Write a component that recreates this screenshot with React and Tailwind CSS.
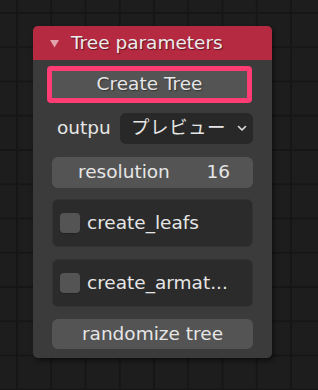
const font = { fontFamily: '"DejaVu Sans", "Noto Sans CJK JP", sans-serif' };

const Checkbox = ({ label }) => (
  <div className="flex items-center h-[48px] mx-[19px] rounded-[6px] bg-[#2b2b2b] border border-[#333333] pl-[7px]">
    <div className="w-[20px] h-[20px] rounded-[4px] bg-[#545454] shadow-[0_1px_0_#222]" />
    <span className="ml-[7px] text-[18.5px] text-[#e6e6e6] leading-none whitespace-nowrap">{label}</span>
  </div>
);

export default function App() {
  return (
    <div
      className="w-[318px] h-[390px] overflow-hidden bg-[#1d1d1d] bg-[linear-gradient(to_right,#161616_2px,transparent_2px),linear-gradient(to_bottom,#161616_2px,transparent_2px)] bg-[size:34.25px_34.25px] bg-[position:16px_12px] pt-[26px] pl-[33px]"
      style={font}
    >
      <div className="w-[239px] h-[332px] rounded-[5px] bg-[#3d3d3d]/95 shadow-[2px_3px_4px_rgba(0,0,0,0.45)] flex flex-col">
        {/* header */}
        <div className="h-[34px] rounded-t-[5px] bg-[#b52a41] flex items-center pl-[17px]">
          <svg width="9" height="9" viewBox="0 0 9 9" className="mt-[1px]">
            <polygon points="0,1 9,1 4.5,8.5" fill="#e2a3ad" />
          </svg>
          <span className="ml-[12px] text-[18.5px] text-[#ececec] leading-none whitespace-nowrap [text-shadow:1px_1px_1px_rgba(0,0,0,0.5)]">
            Tree parameters
          </span>
        </div>

        {/* create tree */}
        <div className="mt-[6px] ml-[14px] w-[205px] h-[37px] rounded-[4px] border-[5px] border-[#ff3d74] bg-[#545454] flex items-center justify-center">
          <span className="text-[18.5px] text-[#e6e6e6] leading-none [text-shadow:1px_1px_1px_rgba(0,0,0,0.4)]">Create Tree</span>
        </div>

        {/* output */}
        <div className="mt-[10px] flex items-center h-[31px]">
          <span className="ml-[24px] w-[63px] text-[18.5px] text-[#e6e6e6] leading-none">outpu</span>
          <div className="w-[133px] h-[31px] rounded-[6px] bg-[#282828] flex items-center pl-[11px] pr-[6px]">
            <span className="flex-1 text-[18.5px] text-[#e6e6e6] leading-none whitespace-nowrap tracking-[0.5px]">プレビュー</span>
            <svg width="10" height="7" viewBox="0 0 10 7">
              <polyline points="1.5,1.5 5,5 8.5,1.5" fill="none" stroke="#e0e0e0" strokeWidth="1.6" strokeLinecap="round" strokeLinejoin="round" />
            </svg>
          </div>
        </div>

        {/* resolution */}
        <div className="mt-[13px] mx-[19px] h-[31px] rounded-[6px] bg-[#545454] flex items-center text-[18.5px] text-[#e6e6e6] leading-none">
          <span className="ml-[26px]">resolution</span>
          <span className="ml-auto mr-[23px]">16</span>
        </div>

        <div className="mt-[11px]">
          <Checkbox label="create_leafs" />
        </div>
        <div className="mt-[12px]">
          <Checkbox label="create_armat..." />
        </div>

        {/* randomize */}
        <div className="mt-[12px] mx-[19px] h-[30px] rounded-[6px] bg-[#545454] flex items-center justify-center">
          <span className="text-[18.5px] text-[#e6e6e6] leading-none">randomize tree</span>
        </div>
      </div>
    </div>
  );
}
